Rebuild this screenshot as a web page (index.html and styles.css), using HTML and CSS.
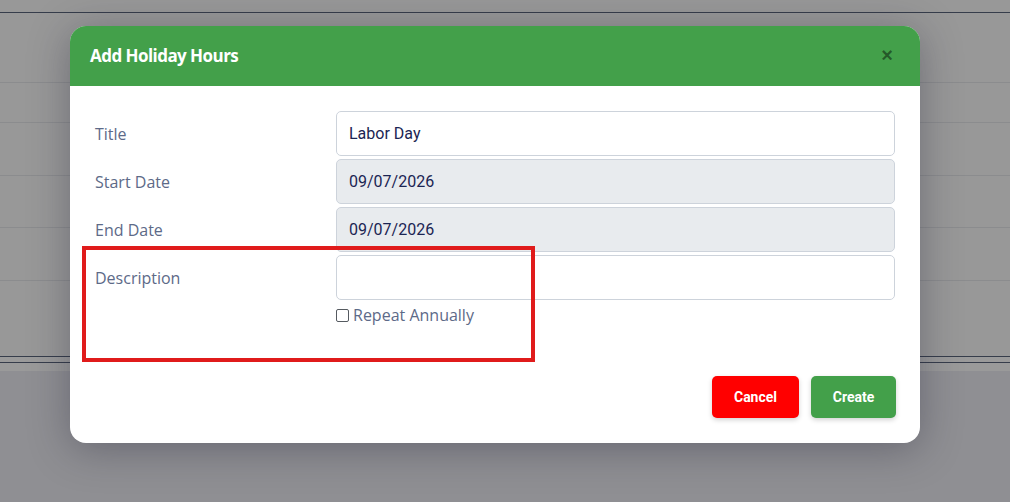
FILE: index.html
```html
<!DOCTYPE html>
<html lang="en">
<head>
<meta charset="utf-8">
<title>Add Holiday Hours</title>
<link rel="stylesheet" href="styles.css">
</head>
<body>
<div class="page">
  <div class="topbar"></div>
  <div class="rule rule-dark"></div>
  <div class="gap-top"></div>
  <div class="row-line"></div>
  <div class="table-row h40"></div>
  <div class="row-line"></div>
  <div class="table-row h52"></div>
  <div class="row-line"></div>
  <div class="table-row h51"></div>
  <div class="row-line"></div>
  <div class="table-row h52"></div>
  <div class="row-line"></div>
  <div class="table-row h76"></div>
  <div class="rule rule-dark"></div>
  <div class="table-row h5"></div>
  <div class="rule rule-dark"></div>
  <div class="footer-strip"></div>
  <div class="lower"></div>
</div>

<div class="modal">
  <div class="modal-header">
    <h2 class="modal-title">Add Holiday Hours</h2>
    <span class="close">&times;</span>
  </div>
  <div class="modal-body">
    <div class="form-grid">
      <label class="label">Title</label>
      <div class="field"><div class="input">Labor Day</div></div>
      <label class="label">Start Date</label>
      <div class="field"><div class="input disabled">09/07/2026</div></div>
      <label class="label">End Date</label>
      <div class="field"><div class="input disabled">09/07/2026</div></div>
      <label class="label">Description</label>
      <div class="field">
        <div class="input"></div>
        <div class="check-row"><span class="checkbox"></span><span class="check-label">Repeat Annually</span></div>
      </div>
    </div>
  </div>
  <div class="modal-footer">
    <button class="btn btn-cancel">Cancel</button>
    <button class="btn btn-create">Create</button>
  </div>
  <div class="highlight"></div>
</div>
</body>
</html>
```

FILE: styles.css
```css
html, body {
  margin: 0;
  padding: 0;
}
body {
  width: 1010px;
  height: 502px;
  overflow: hidden;
  background: #8f8f93;
  position: relative;
  font-family: "Open Sans", "Liberation Sans", sans-serif;
}
.page {
  display: flex;
  flex-direction: column;
}
.topbar {
  height: 12px;
  background: #989898;
}
.rule {
  height: 1px;
}
.rule-dark {
  background: #363d4b;
}
.gap-top {
  height: 69px;
  background: #989898;
}
.row-line {
  height: 1px;
  background: #8b8c8e;
}
.table-row {
  background: #989898;
}
.h40 { height: 39px; }
.h52 { height: 52px; }
.h51 { height: 51px; }
.h76 { height: 75px; }
.h5 { height: 5px; background: #9a9a9a; }
.footer-strip {
  height: 8px;
  background: #9a9a9a;
}
.lower {
  height: 140px;
  background: #8f8f93;
}

.modal {
  position: absolute;
  left: 70px;
  top: 26px;
  width: 850px;
  height: 417px;
  background: #ffffff;
  border-radius: 16px;
  overflow: hidden;
  box-shadow: 0 6px 40px rgba(30, 30, 50, 0.35);
  display: flex;
  flex-direction: column;
}
.modal-header {
  height: 60px;
  background: #43a04a;
  display: flex;
  align-items: center;
  justify-content: space-between;
  padding: 0 27px 0 20px;
  flex-shrink: 0;
}
.modal-title {
  margin: 0;
  color: #ffffff;
  font-family: "Open Sans", sans-serif;
  font-weight: 700;
  font-size: 17px;
  letter-spacing: -0.55px;
  padding-bottom: 2px;
}
.close {
  color: rgba(0, 0, 0, 0.45);
  font-family: "Liberation Sans", sans-serif;
  font-weight: 700;
  font-size: 20px;
  line-height: 1;
  padding-bottom: 2px;
}
.modal-body {
  padding: 25px 25px 25px 25px;
}
.form-grid {
  display: grid;
  grid-template-columns: 241px 1fr;
  row-gap: 3px;
}
.label {
  font-family: "Open Sans", sans-serif;
  font-size: 16px;
  color: #5d6a88;
  line-height: 44px;
  padding-top: 1px;
}
.field {
  display: flex;
  flex-direction: column;
}
.input {
  height: 45px;
  box-sizing: border-box;
  border: 1px solid #cdd3db;
  border-radius: 5px;
  padding: 0 12px;
  display: flex;
  align-items: center;
  font-family: Roboto, "Liberation Sans", sans-serif;
  font-size: 16px;
  color: #1b2553;
  background: #ffffff;
}
.input.disabled {
  background: #e8ebee;
}
.check-row {
  display: flex;
  align-items: center;
  margin-top: 4px;
  height: 22px;
}
.checkbox {
  width: 11px;
  height: 11px;
  border: 1px solid #555a60;
  border-radius: 2px;
  background: #fff;
  margin-right: 4px;
}
.check-label {
  font-family: "Open Sans", sans-serif;
  font-size: 16px;
  color: #5d6a88;
}
.modal-footer {
  display: flex;
  justify-content: flex-end;
  gap: 12px;
  padding: 25px 24px 25px 25px;
}
.btn {
  height: 42px;
  border: none;
  border-radius: 5px;
  padding: 0 20px;
  font-family: Roboto, "Liberation Sans", sans-serif;
  font-weight: 700;
  font-size: 14px;
  color: #ffffff;
  box-shadow: 0 2px 5px rgba(0, 0, 0, 0.18);
}
.btn-cancel {
  background: #ff0000;
  width: 87px;
}
.btn-create {
  background: #43a04a;
  width: 85px;
}
.highlight {
  position: absolute;
  left: 12px;
  top: 220px;
  width: 453px;
  height: 116px;
  box-sizing: border-box;
  border: 4px solid #e01b1b;
}
```
